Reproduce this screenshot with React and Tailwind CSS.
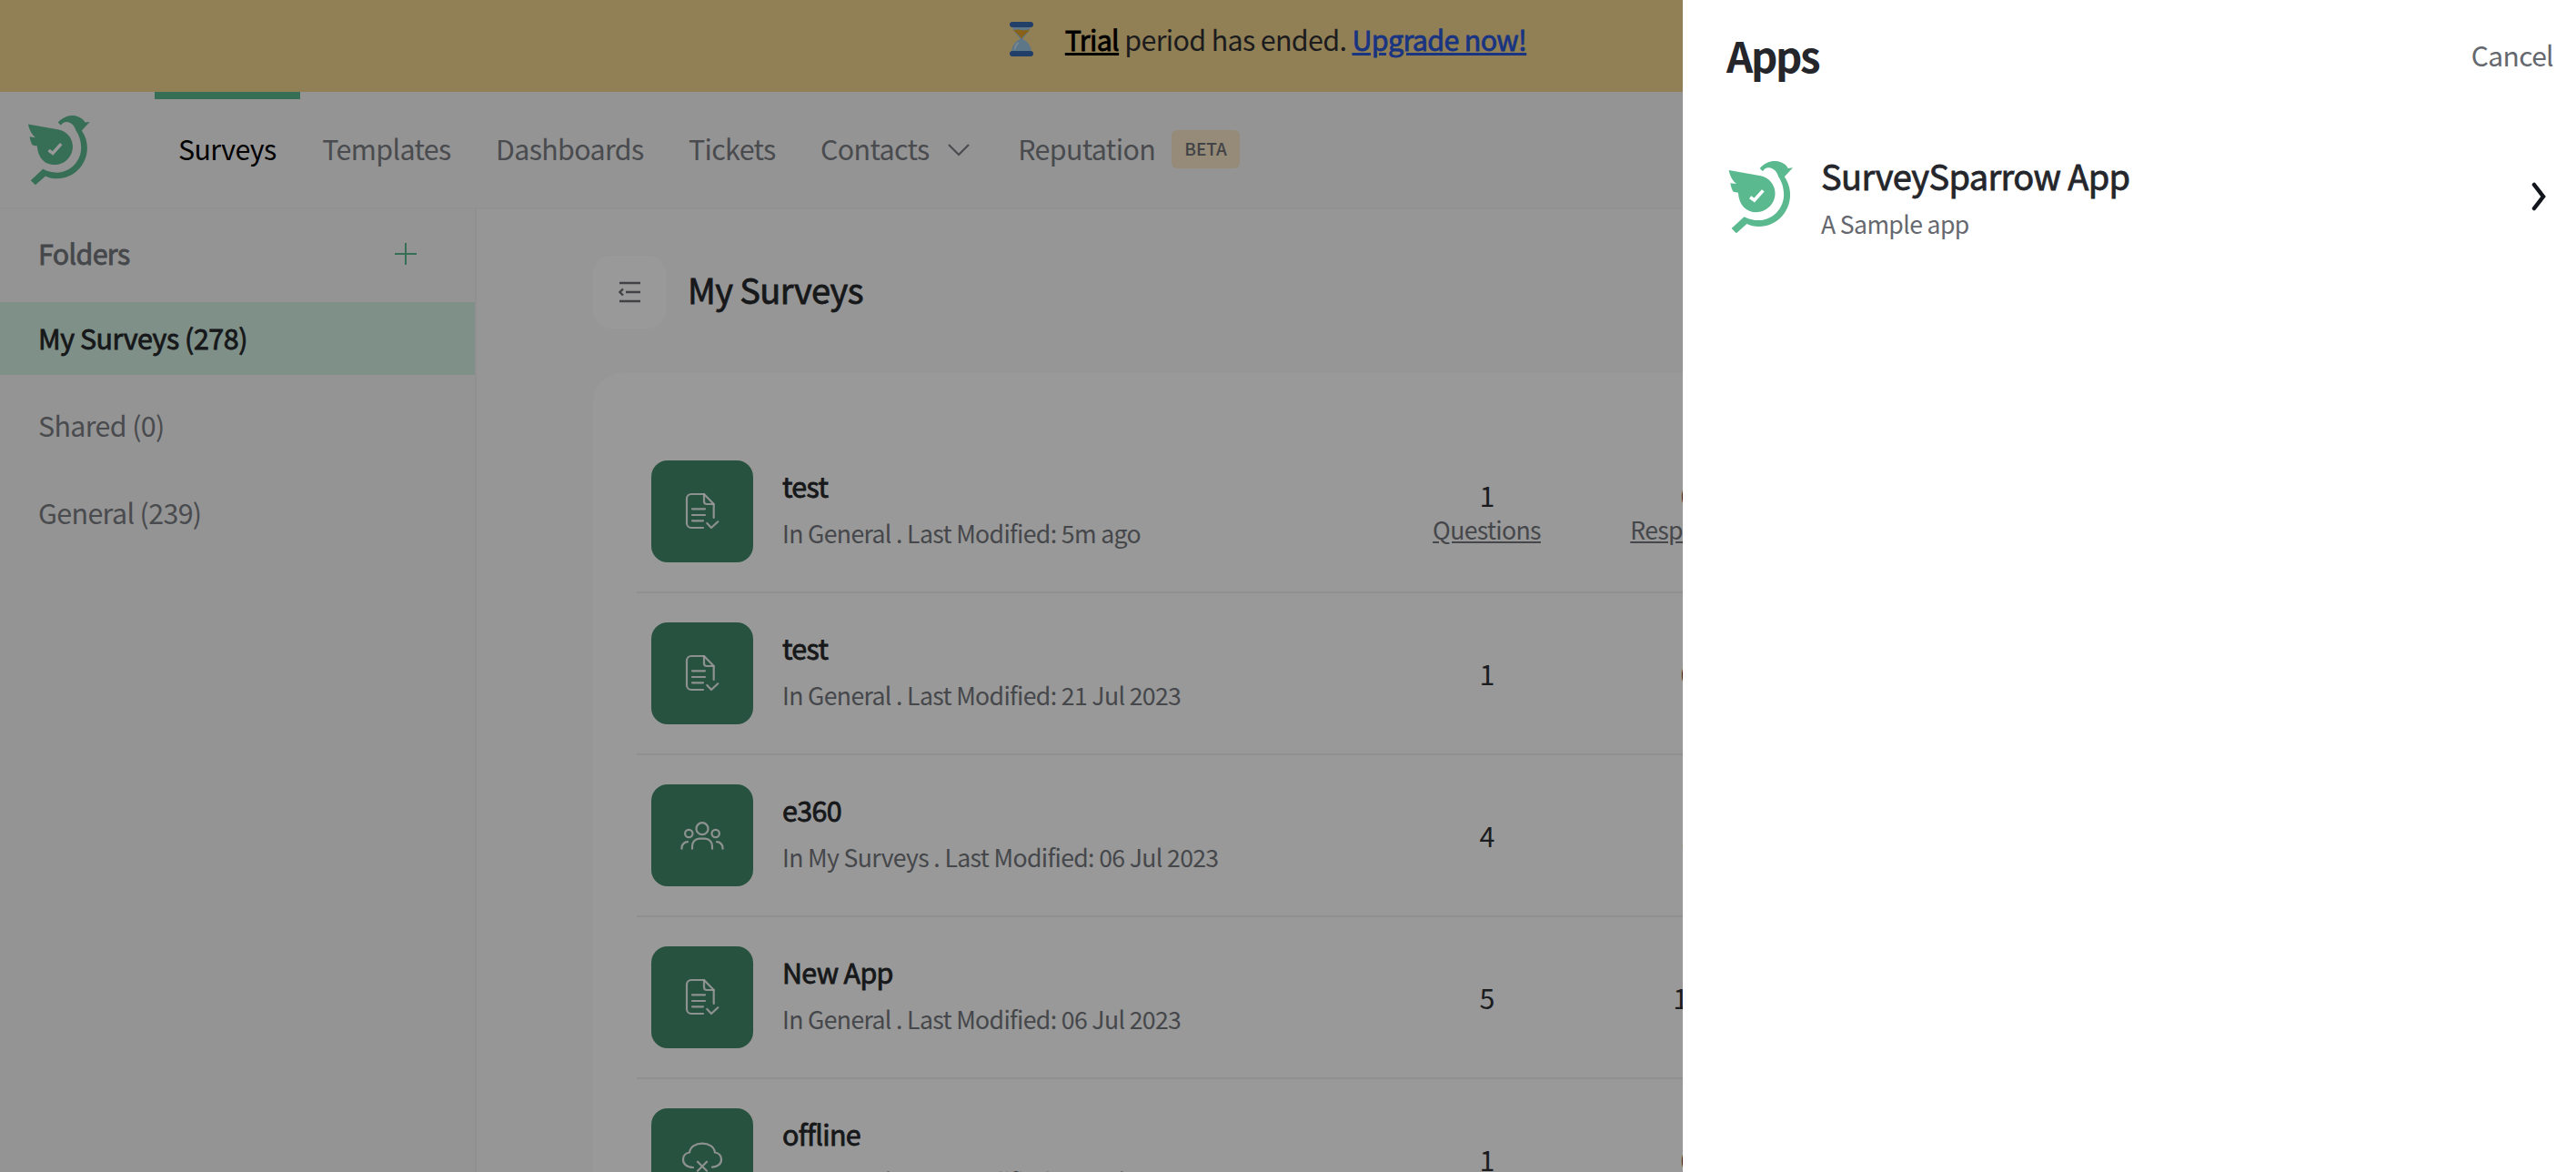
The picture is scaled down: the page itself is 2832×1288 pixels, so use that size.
const SANS = 'font-["Noto_Sans_CJK_JP","Noto_Sans",sans-serif] tracking-[-0.04em]';
// the CJK family has no medium cut here, so the semi-heavy labels get a thin stroke
const MEDIUM = '[-webkit-text-stroke:0.8px_currentColor]';

const navItems = ['Surveys', 'Templates', 'Dashboards', 'Tickets'];

const surveys = [
  { name: 'test', sub: 'In General . Last Modified: 5m ago', icon: 'doc', questions: '1', responses: '0', labels: true },
  { name: 'test', sub: 'In General . Last Modified: 21 Jul 2023', icon: 'doc', questions: '1', responses: '0' },
  { name: 'e360', sub: 'In My Surveys . Last Modified: 06 Jul 2023', icon: 'people', questions: '4', responses: '1' },
  { name: 'New App', sub: 'In General . Last Modified: 06 Jul 2023', icon: 'doc', questions: '5', responses: '12' },
  { name: 'offline', sub: 'In General . Last Modified: 06 Jul 2023', icon: 'cloud', questions: '1', responses: '0' },
];

function BirdLogo({ className }) {
  return (
    <svg viewBox="36 45 216 245" className={className} fill="#5bb98f">
      <path d="M37 78 L143 97 C172 103 191 128 191 155 C191 190 163 218 128 218 C95 218 71 195 68 153 L52 150 C47 142 44 132 42 121 L62 124 C48 112 40 95 37 78 Z" />
      <path d="M140 72 C155 55 175 47 193 48 C214 50 228 60 234 72 L250 70 L222 100 C235 118 241 140 241 160 C241 218 195 266 137 266 C122 266 108 263 97 257 L62 288 L46 272 L88 233 C100 240 120 245 137 245 C183 245 220 205 220 160 C220 135 212 114 202 100 C198 84 186 71 170 70 C160 70 153 76 150 82 Z" />
      <path d="M108 168 L122 178 L151 146" fill="none" stroke="#fff" strokeWidth="11" />
    </svg>
  );
}

function Hourglass() {
  return (
    <svg viewBox="0 0 30 40" className="h-[40px] w-[30px]">
      <path d="M5 5 H25 C25 12 19 15 16.500 20 C21 22 26 27 26 35 H4 C4 27 9 22 13.500 20 C11 15 5 12 5 5 Z" fill="#9cc6e4" />
      <path d="M6 10 C12 8 18 12 24 9 C22 14 17 15 15 20 C13 15 9 14 6 10 Z" fill="#e3a32a" />
      <path d="M8 31 C8 27 10 25 12 24" fill="none" stroke="#d5e8f5" strokeWidth="1.500" />
      <rect x="2" y="1" width="26" height="6" rx="3" fill="#3a69b0" />
      <rect x="2" y="33" width="26" height="6" rx="3" fill="#3a69b0" />
    </svg>
  );
}

function DocIcon() {
  return (
    <svg viewBox="0 0 48 48" className="h-12 w-12" fill="none" stroke="#fff" strokeOpacity="0.9" strokeWidth="2.2" strokeLinecap="round" strokeLinejoin="round">
      <path d="M25 42H12a5 5 0 0 1-5-5V10a5 5 0 0 1 5-5H26L36.700 16V31" />
      <path d="M26 5V13a3 3 0 0 0 3 3H36.700" />
      <path d="M13 21.300H27M13 28H27M13 34.300H25" />
      <path d="M29.300 37L34 42L41.300 35.300" />
    </svg>
  );
}

function PeopleIcon() {
  return (
    <svg viewBox="0 0 48 48" className="h-12 w-12" fill="none" stroke="#fff" strokeOpacity="0.9" strokeWidth="2.2" strokeLinecap="round">
      <circle cx="24" cy="16.700" r="6.500" />
      <circle cx="9.300" cy="22" r="4.200" />
      <circle cx="38.700" cy="22" r="4.200" />
      <path d="M13 38.700v-3a8 8 0 0 1 8-8h6a8 8 0 0 1 8 8v3" />
      <path d="M1.500 38.700v-1a6.500 6.500 0 0 1 6.500-6.500" />
      <path d="M46.500 38.700v-1a6.500 6.500 0 0 0-6.500-6.500" />
    </svg>
  );
}

function CloudIcon() {
  return (
    <svg viewBox="0 0 48 48" className="h-12 w-12" fill="none" stroke="#fff" strokeOpacity="0.9" strokeWidth="2.2" strokeLinecap="round">
      <path d="M14 33C7 33 3 29 3 24.500C3 20 6 17 10 16.500C11 10 17 6.700 24 6.700C31 6.700 37 10 38 16.500C42 17 45 20 45 24.500C45 29 41 32.500 35 32.700" />
      <path d="M19 26.700L29 36.700M29 26.700L19 36.700" />
    </svg>
  );
}

function SurveyIcon({ type }) {
  if (type === 'people') return <PeopleIcon />;
  if (type === 'cloud') return <CloudIcon />;
  return <DocIcon />;
}

function Stat({ value, label }) {
  return (
    <div className="flex w-[221px] shrink-0 flex-col items-center">
      <span className="text-[30.400px] leading-[36px] text-[#2e3035]">{value}</span>
      {label && <span className="mt-[4px] text-[26.600px] leading-[32px] text-[#74777d] underline">{label}</span>}
    </div>
  );
}

function SurveyRow({ survey }) {
  return (
    <div className="flex h-[178px] items-center border-b-2 border-[#f0f0f0] pl-4">
      <div className="flex h-[112px] w-[112px] shrink-0 items-center justify-center rounded-[18px] bg-[#43896b]">
        <SurveyIcon type={survey.icon} />
      </div>
      <div className="ml-[32px] w-[664px] shrink-0 -translate-y-[3px]">
        <div className={`text-[30.400px] leading-[44px] text-[#26282c] ${MEDIUM}`}>{survey.name}</div>
        <div className="mt-[10px] text-[26.600px] leading-[40px] text-[#74777d]">{survey.sub}</div>
      </div>
      <Stat value={survey.questions} label={survey.labels ? 'Questions' : null} />
      <Stat value={survey.responses} label={survey.labels ? 'Responses' : null} />
    </div>
  );
}

export default function App() {
  return (
    <div className={`relative h-[1288px] w-[2832px] overflow-hidden bg-[#fafafa] ${SANS}`}>
      <div className="flex h-[101px] items-center justify-center gap-[33px] bg-[#f2d58e] pr-[46px] pb-[16px]">
        <Hourglass />
        <p className="text-[30.400px] leading-[44px] text-[#2f3033]">
          <span className={`text-black underline ${MEDIUM}`}>Trial</span> period has ended.{' '}
          <a className={`text-[#2b57d8] underline ${MEDIUM}`}>Upgrade now!</a>
        </p>
      </div>

      <header className="flex h-[129px] border-b-2 border-[#f2f2f2] bg-[#f7f7f7]">
        <div className="w-[170px] shrink-0 pt-[25px] pl-[30px]">
          <BirdLogo className="h-[78px] w-[70px]" />
        </div>
        <nav className="flex items-center text-[30.400px] text-[#7a7d83]">
          {navItems.map((item, i) => (
            <a
              key={item}
              className={`flex h-full items-center ${i === 0 ? 'border-t-[8px] border-[#5bb98f] px-[26px] pb-[10px] text-black' : 'px-[24.700px] pb-[2px]'}`}
            >
              {item}
            </a>
          ))}
          <a className="flex h-full items-center gap-[20px] px-[24.700px] pb-[2px]">
            Contacts
            <svg viewBox="0 0 24 24" className="h-6 w-6" fill="none" stroke="#7a7d83" strokeWidth="2.200">
              <path d="M1 7L12 18L23 7" />
            </svg>
          </a>
          <a className="flex h-full items-center gap-[18px] pb-[2px] pl-[29px]">
            Reputation
            <span className="flex h-[42px] w-[75px] items-center justify-center rounded-[6px] bg-[#f8e8c8] text-[19px] font-medium tracking-normal text-[#6f7176]">
              BETA
            </span>
          </a>
        </nav>
      </header>

      <div className="flex">
        <aside className="h-[1058px] w-[524px] shrink-0 border-r-2 border-[#f0f0f0] bg-[#f7f7f7]">
          <div className="flex h-[102px] items-center justify-between pr-[64px] pb-[4px] pl-[42px]">
            <span className={`text-[30.400px] text-[#73777d] ${MEDIUM}`}>Folders</span>
            <svg viewBox="0 0 24 24" className="h-6 w-6" fill="none" stroke="#5bb98f" strokeWidth="2">
              <path d="M12 0V24M0 12H24" />
            </svg>
          </div>
          <div className={`flex h-[80px] items-center bg-[#d4f0e3] pl-[42px] text-[30.400px] tracking-[-0.015em] text-[#26282c] ${MEDIUM}`}>
            My Surveys (278)
          </div>
          <div className="flex h-[96px] items-center pt-[16px] pl-[42px] text-[30.400px] text-[#7a7d83]">Shared (0)</div>
          <div className="flex h-[96px] items-center pt-[16px] pl-[42px] text-[30.400px] text-[#7a7d83]">General (239)</div>
        </aside>

        <main className="min-w-0 flex-1 bg-[#fafafa] pt-[51px] pl-[128px]">
          <div className="flex items-center gap-[24px]">
            <div className="flex h-[80px] w-[80px] items-center justify-center rounded-[20px] bg-white">
              <svg viewBox="0 0 24 24" className="h-6 w-6" fill="none" stroke="#6b6e73" strokeWidth="2.400">
                <path d="M1 2H24M8 12H24M1 22H24" />
                <path d="M5 8.500L1.500 12L5 15.500" />
              </svg>
            </div>
            <h1 className={`-translate-y-[3px] text-[38px] leading-[56px] font-normal text-[#26282c] ${MEDIUM}`}>My Surveys</h1>
          </div>
          <div className="mt-[49px] rounded-tl-[32px] bg-white pt-[64px] pl-[48px]">
            {surveys.map((survey, i) => (
              <SurveyRow key={i} survey={survey} />
            ))}
          </div>
        </main>
      </div>

      <div className="absolute inset-0 bg-black/40" />

      <aside className="absolute top-0 right-0 h-full w-[982px] bg-white">
        <div className="flex items-start justify-between pt-[32px] pr-[25px] pl-[48px]">
          <h2 className="text-[45.600px] leading-[56px] font-bold tracking-[-0.05em] text-[#24262b]">Apps</h2>
          <button className="text-[30px] leading-[56px] text-[#65686e]">Cancel</button>
        </div>
        <div className="mt-[80px] flex items-center pr-[32px] pl-[50px]">
          <BirdLogo className="h-[81px] w-[72px] shrink-0" />
          <div className="ml-[30px] flex-1">
            <div className={`text-[38px] leading-[50px] text-[#24262b] ${MEDIUM}`}>SurveySparrow App</div>
            <div className="mt-[10px] text-[26.600px] leading-[36px] text-[#65686e]">A Sample app</div>
          </div>
          <svg viewBox="0 0 18 32" className="h-8 w-[18px]" fill="none" stroke="#12161c" strokeWidth="4.500" strokeLinecap="round">
            <path d="M4 3L14 16L4 29" />
          </svg>
        </div>
      </aside>
    </div>
  );
}
